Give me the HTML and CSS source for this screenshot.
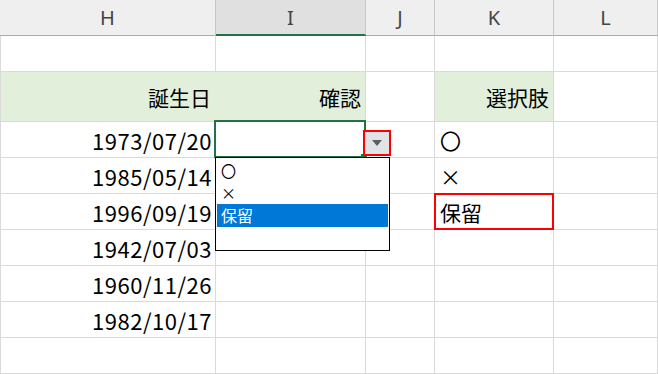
FILE: index.html
```html
<!DOCTYPE html>
<html lang="ja">
<head>
  <meta charset="UTF-8">
  <title>入力規則</title>
  <link rel="stylesheet" href="styles.css">
</head>
<body>
  <div class="sheet">
    <!-- column headers -->
    <div class="col-head">H</div>
    <div class="col-head active">I</div>
    <div class="col-head">J</div>
    <div class="col-head">K</div>
    <div class="col-head">L</div>

    <!-- row 1 -->
    <div class="cell first"></div>
    <div class="cell"></div>
    <div class="cell"></div>
    <div class="cell"></div>
    <div class="cell"></div>

    <!-- row 2 : titles -->
    <div class="cell first fill joined right">誕生日</div>
    <div class="cell fill right">確認</div>
    <div class="cell"></div>
    <div class="cell fill right">選択肢</div>
    <div class="cell"></div>

    <!-- row 3 -->
    <div class="cell first right date">1973/07/20</div>
    <div class="cell selected">
      <span class="handle"></span>
      <span class="drop-btn">
        <svg width="10" height="6" viewBox="0 0 10 6"><polygon points="0,0 10,0 5,6" fill="#5f5f5f"/></svg>
      </span>
      <ul class="drop-list">
        <li>〇</li>
        <li>×</li>
        <li class="picked">保留</li>
      </ul>
    </div>
    <div class="cell"></div>
    <div class="cell">〇</div>
    <div class="cell"></div>

    <!-- row 4 -->
    <div class="cell first right date">1985/05/14</div>
    <div class="cell"></div>
    <div class="cell"></div>
    <div class="cell">×</div>
    <div class="cell"></div>

    <!-- row 5 -->
    <div class="cell first right date">1996/09/19</div>
    <div class="cell"></div>
    <div class="cell"></div>
    <div class="cell marked">保留</div>
    <div class="cell"></div>

    <!-- row 6 -->
    <div class="cell first right date">1942/07/03</div>
    <div class="cell"></div>
    <div class="cell"></div>
    <div class="cell"></div>
    <div class="cell"></div>

    <!-- row 7 -->
    <div class="cell first right date">1960/11/26</div>
    <div class="cell"></div>
    <div class="cell"></div>
    <div class="cell"></div>
    <div class="cell"></div>

    <!-- row 8 -->
    <div class="cell first right date">1982/10/17</div>
    <div class="cell"></div>
    <div class="cell"></div>
    <div class="cell"></div>
    <div class="cell"></div>

    <!-- row 9 -->
    <div class="cell first"></div>
    <div class="cell"></div>
    <div class="cell"></div>
    <div class="cell"></div>
    <div class="cell"></div>
  </div>
</body>
</html>
```

FILE: styles.css
```css
* {
  box-sizing: border-box;
}

body {
  margin: 0;
  background: #fff;
  overflow: hidden;
  font-family: "Noto Sans CJK JP", sans-serif;
  color: #000;
}

.sheet {
  display: grid;
  grid-template-columns: 216px 150px 69px 119px 104px;
  grid-template-rows: 36px 36px 50px repeat(7, 36px);
  width: 658px;
  height: 374px;
}

.col-head {
  display: flex;
  align-items: center;
  justify-content: center;
  background-color: #efefef;
  border-right: 1px solid #c8c8c8;
  border-bottom: 1px solid #ababab;
  font-family: "Noto Sans", sans-serif;
  font-size: 20px;
  color: #444;
}

.col-head.active {
  background-color: #e0e0e0;
  border-bottom: 2px solid #217346;
}

.cell {
  position: relative;
  display: flex;
  align-items: center;
  padding: 0 5px;
  border-right: 1px solid #dadada;
  border-bottom: 1px solid #dadada;
  font-size: 21px;
  white-space: nowrap;
}

.cell.first {
  border-left: 1px solid #dadada;
}

.cell.right {
  justify-content: flex-end;
  padding-right: 4px;
}

.cell.date {
  font-size: 22px;
  letter-spacing: 0.5px;
  padding-right: 3px;
}

.cell.fill {
  background-color: #e2efda;
}

.cell.joined {
  border-right-color: #e2efda;
}

.cell.selected::after {
  content: "";
  position: absolute;
  left: -2px;
  top: -2px;
  right: -1px;
  bottom: -1px;
  border: 2px solid #217346;
}

.handle {
  position: absolute;
  right: -2px;
  bottom: -2px;
  width: 6px;
  height: 5px;
  background-color: #217346;
  z-index: 2;
}

.drop-btn {
  position: absolute;
  left: 147px;
  top: 8px;
  width: 28px;
  height: 26px;
  display: flex;
  align-items: center;
  justify-content: center;
  background-color: #e1e3e6;
  border: 2px solid #ff0000;
  z-index: 3;
}

.drop-list {
  position: absolute;
  left: -1px;
  top: 35px;
  width: 175px;
  height: 94px;
  margin: 0;
  padding: 2px 1px 0;
  list-style: none;
  background-color: #fff;
  border: 1px solid #000;
  z-index: 4;
}

.drop-list li {
  height: 22px;
  line-height: 22px;
  padding-left: 4px;
  font-size: 15px;
}

.drop-list li.picked {
  height: 23px;
  line-height: 23px;
  font-size: 16px;
  background-color: #0078d7;
  color: #fff;
}

.cell.marked::after {
  content: "";
  position: absolute;
  left: -1px;
  top: -1px;
  right: -1px;
  bottom: -1px;
  border: 2px solid #ff0000;
}
```
